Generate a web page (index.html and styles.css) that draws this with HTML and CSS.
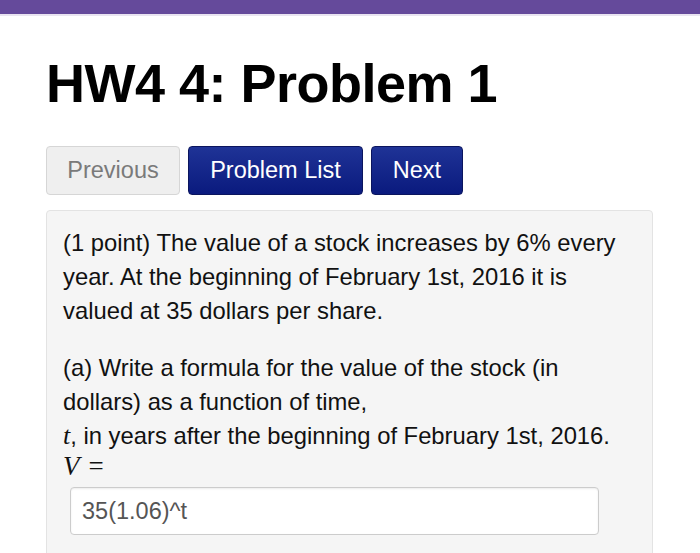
FILE: index.html
```html
<!DOCTYPE html>
<html>
<head>
<meta charset="utf-8">
<link rel="stylesheet" href="styles.css">
</head>
<body>
<div class="topbar"></div>
<main class="content">
  <h1 class="title">HW4 4: Problem 1</h1>
  <nav class="nav">
    <span class="btn btn-disabled">Previous</span>
    <span class="btn btn-primary btn-list">Problem List</span>
    <span class="btn btn-primary btn-next">Next</span>
  </nav>
  <section class="panel">
    <p class="para">(1 point) The value of a stock increases by 6% every year. At the beginning of February 1st, 2016 it is valued at 35 dollars per share.</p>
    <p class="para para-last">(a) Write a formula for the value of the stock (in dollars) as a function of time,<br><span class="math">t</span>, in years after the beginning of February 1st, 2016.</p>
    <div class="formula"><span class="math math-v">V</span><span class="eq">=</span></div>
    <div class="answer">35(1.06)^t</div>
  </section>
</main>
</body>
</html>
```
FILE: styles.css
```css
html, body {
  margin: 0;
  padding: 0;
  background: #ffffff;
  font-family: "Liberation Sans", Arial, sans-serif;
  color: #111111;
  overflow: hidden;
}
.topbar {
  height: 14px;
  background: #654a9b;
  border-bottom: 2px solid #e9e4f1;
}
.content {
  padding: 0 46px;
}
.title {
  margin: 32px 0 0 0;
  font-size: 54px;
  line-height: 70px;
  font-weight: bold;
  color: #000;
  letter-spacing: -0.5px;
}
.nav {
  display: flex;
  gap: 8px;
  margin-top: 28px;
}
.btn {
  display: inline-flex;
  align-items: center;
  justify-content: center;
  height: 49px;
  border-radius: 4px;
  font-size: 23.5px;
  box-sizing: border-box;
}
.btn-disabled {
  width: 134px;
  background: #efefef;
  border: 1px solid #d6d6d6;
  color: #7a7a7a;
}
.btn-primary {
  background: linear-gradient(#1f3396, #0a1a7e);
  border: 1px solid #0b155e;
  color: #ffffff;
}
.btn-list { width: 175px; }
.btn-next { width: 92px; }
.panel {
  margin-top: 15px;
  background: #f5f5f5;
  border: 1px solid #e3e3e3;
  border-radius: 4px;
  padding: 15px 16px 40px 16px;
  width: 607px;
  box-sizing: border-box;
  min-height: 400px;
}
.para {
  margin: 0 0 23px 0;
  font-size: 23.8px;
  line-height: 34px;
  color: #111;
}
.para-last {
  margin-bottom: 0;
}
.formula {
  line-height: 26px;
  height: 26px;
  color: #111;
}
.math {
  font-family: "Liberation Serif", "Times New Roman", serif;
  font-style: italic;
  font-size: 26px;
}
.math-v {
  font-size: 27px;
  margin-right: 9px;
}
.eq {
  font-family: "Liberation Serif", "Times New Roman", serif;
  font-size: 27px;
}
.answer {
  margin: 8px 0 0 7px;
  width: 529px;
  height: 48px;
  box-sizing: border-box;
  background: #fff;
  border: 1px solid #cccccc;
  border-radius: 4px;
  box-shadow: inset 0 1px 2px rgba(0,0,0,0.08);
  padding: 0 11px;
  display: flex;
  align-items: center;
  font-size: 23.5px;
  color: #555;
}
```
